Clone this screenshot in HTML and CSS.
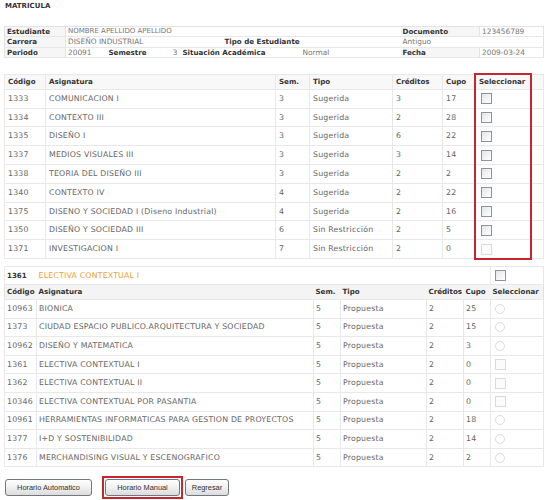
FILE: index.html
```html
<!DOCTYPE html>
<html lang="es">
<head>
<meta charset="utf-8">
<title>Matricula</title>
<link rel="stylesheet" href="styles.css">
</head>
<body>
<div class="page">
  <h1 class="title">MATRICULA</h1>

  <table class="info">
    <colgroup>
      <col class="i1"><col class="i2"><col class="i3"><col class="i4"><col class="i5"><col class="i6"><col class="i7"><col class="i8"><col class="i9">
    </colgroup>
    <tr>
      <th>Estudiante</th>
      <td colspan="6" class="name">NOMBRE APELLIDO APELLIDO</td>
      <th>Documento</th>
      <td>123456789</td>
    </tr>
    <tr>
      <th>Carrera</th>
      <td colspan="4">DISEÑO INDUSTRIAL</td>
      <th colspan="2" class="plain">Tipo de Estudiante</th>
      <td colspan="2">Antiguo</td>
    </tr>
    <tr>
      <th>Periodo</th>
      <td>20091</td>
      <th class="plain">Semestre</th>
      <td class="num">3</td>
      <th colspan="2" class="plain">Situación Académica</th>
      <td>Normal</td>
      <th>Fecha</th>
      <td>2009-03-24</td>
    </tr>
  </table>

  <div class="main-wrap">
    <table class="grid main">
      <colgroup>
        <col class="m1"><col class="m2"><col class="m3"><col class="m4"><col class="m5"><col class="m6"><col class="m7">
      </colgroup>
      <tr class="head">
        <th>Código</th><th>Asignatura</th><th>Sem.</th><th>Tipo</th><th>Créditos</th><th>Cupo</th><th>Seleccionar</th>
      </tr>
      <tr><td>1333</td><td>COMUNICACION I</td><td>3</td><td>Sugerida</td><td>3</td><td>17</td><td><span class="chk"></span></td></tr>
      <tr><td>1334</td><td>CONTEXTO III</td><td>3</td><td>Sugerida</td><td>2</td><td>28</td><td><span class="chk"></span></td></tr>
      <tr><td>1335</td><td>DISEÑO I</td><td>3</td><td>Sugerida</td><td>6</td><td>22</td><td><span class="chk"></span></td></tr>
      <tr><td>1337</td><td>MEDIOS VISUALES III</td><td>3</td><td>Sugerida</td><td>3</td><td>14</td><td><span class="chk"></span></td></tr>
      <tr><td>1338</td><td>TEORIA DEL DISEÑO III</td><td>3</td><td>Sugerida</td><td>2</td><td>2</td><td><span class="chk"></span></td></tr>
      <tr><td>1340</td><td>CONTEXTO IV</td><td>4</td><td>Sugerida</td><td>2</td><td>22</td><td><span class="chk"></span></td></tr>
      <tr><td>1375</td><td>DISENO Y SOCIEDAD I (Diseno Industrial)</td><td>4</td><td>Sugerida</td><td>2</td><td>16</td><td><span class="chk"></span></td></tr>
      <tr><td>1350</td><td>DISEÑO Y SOCIEDAD III</td><td>6</td><td>Sin Restricción</td><td>2</td><td>5</td><td><span class="chk"></span></td></tr>
      <tr><td>1371</td><td>INVESTIGACION I</td><td>7</td><td>Sin Restricción</td><td>2</td><td>0</td><td><span class="chk off"></span></td></tr>
    </table>
    <div class="hl"></div>
  </div>

  <table class="grid elect">
    <colgroup>
      <col class="e1"><col class="e2"><col class="e3"><col class="e4"><col class="e5"><col class="e6"><col class="e7">
    </colgroup>
    <tr class="group">
      <th>1361</th><td colspan="5" class="gname">ELECTIVA CONTEXTUAL I</td><td><span class="chk"></span></td>
    </tr>
    <tr class="head2">
      <th>Código</th><th>Asignatura</th><th>Sem.</th><th>Tipo</th><th>Créditos</th><th>Cupo</th><th>Seleccionar</th>
    </tr>
    <tr><td>10963</td><td>BIONICA</td><td>5</td><td>Propuesta</td><td>2</td><td>25</td><td><span class="rad"></span></td></tr>
    <tr><td>1373</td><td>CIUDAD ESPACIO PUBLICO.ARQUITECTURA Y SOCIEDAD</td><td>5</td><td>Propuesta</td><td>2</td><td>15</td><td><span class="rad"></span></td></tr>
    <tr><td>10962</td><td>DISEÑO Y MATEMATICA</td><td>5</td><td>Propuesta</td><td>2</td><td>3</td><td><span class="rad"></span></td></tr>
    <tr><td>1361</td><td>ELECTIVA CONTEXTUAL I</td><td>5</td><td>Propuesta</td><td>2</td><td>0</td><td><span class="chk off"></span></td></tr>
    <tr><td>1362</td><td>ELECTIVA CONTEXTUAL II</td><td>5</td><td>Propuesta</td><td>2</td><td>0</td><td><span class="chk off"></span></td></tr>
    <tr><td>10346</td><td>ELECTIVA CONTEXTUAL POR PASANTIA</td><td>5</td><td>Propuesta</td><td>2</td><td>0</td><td><span class="chk off"></span></td></tr>
    <tr><td>10961</td><td>HERRAMIENTAS INFORMATICAS PARA GESTION DE PROYECTOS</td><td>5</td><td>Propuesta</td><td>2</td><td>18</td><td><span class="rad"></span></td></tr>
    <tr><td>1377</td><td>I+D Y SOSTENIBILIDAD</td><td>5</td><td>Propuesta</td><td>2</td><td>14</td><td><span class="rad"></span></td></tr>
    <tr><td>1376</td><td>MERCHANDISING VISUAL Y ESCENOGRAFICO</td><td>5</td><td>Propuesta</td><td>2</td><td>2</td><td><span class="rad"></span></td></tr>
  </table>

  <div class="buttons">
    <button class="btn b1" type="button">Horario Automatico</button>
    <div class="mark"><button class="btn b2" type="button">Horario Manual</button></div>
    <button class="btn b3" type="button">Regresar</button>
  </div>
</div>
</body>
</html>
```

FILE: styles.css
```css
html, body {
  margin: 0;
  padding: 0;
  background: #ffffff;
}
body {
  font-family: "DejaVu Sans", Verdana, sans-serif;
  font-size: 7.8px;
  color: #666;
}
.page {
  padding: 0 0 0 4px;
}
.title {
  margin: 0 0 14px 1px;
  font-size: 7px;
  line-height: 12px;
  font-weight: bold;
  color: #333;
}

table {
  border-collapse: collapse;
  table-layout: fixed;
  width: 539px;
}
th, td {
  padding: 0 0 0 3px;
  text-align: left;
  white-space: nowrap;
  overflow: hidden;
}
td { letter-spacing: 0.2px; }
th {
  font-weight: bold;
  font-size: 7.1px;
  color: #333;
}

/* info table */
.info {
  border: 1px solid #e2e2e2;
}
.info tr { height: 10.3px; }
.info th, .info td {
  line-height: 9px;
  padding-left: 2px;
  border-bottom: 1px solid #e8e8e8;
}
.info th { background: #f6f6f6; border-right: 1px solid #e4e4e4; }
.info th.plain { background: #fff; border-right: 0; }
.info td { font-size: 7.4px; color: #777; letter-spacing: 0; }
.info td.name { font-size: 7px; }
.info td.num { text-align: right; padding-right: 3px; }
.i1 { width: 61px; } .i2 { width: 41px; } .i3 { width: 59px; }
.i4 { width: 15px; } .i5 { width: 42px; } .i6 { width: 78px; }
.i7 { width: 100px; } .i8 { width: 79px; } .i9 { width: 64px; }

/* grids */
.grid {
  border: 1px solid #e0e0e0;
}
.grid td {
  border: 1px solid #e8e8e8;
  line-height: 10px;
}
.grid th {
  line-height: 10px;
}

.main-wrap {
  position: relative;
  margin-top: 16px;
}
.main .head { height: 15px; }
.main .head th { border: 1px solid #e8e8e8; background: #f8f8f8; }
.main tr { height: 18.8px; }
.m1 { width: 41px; } .m2 { width: 230px; } .m3 { width: 34px; }
.m4 { width: 83px; } .m5 { width: 50px; } .m6 { width: 33px; } .m7 { width: 68px; }

.hl {
  position: absolute;
  left: 470px;
  top: -1px;
  width: 58px;
  height: 187px;
  border: 2px solid #c8252d;
  box-sizing: border-box;
}

.elect {
  margin-top: 7px;
}
.elect th, .elect td { padding-left: 2px; }
.elect tr { height: 18.6px; }
.elect .group { height: 18px; }
.elect .group th { border: 1px solid #e8e8e8; border-right: 0; }
.elect .group td.gname { border-left: 0; color: #e8a23a; }
.elect .head2 { height: 15px; }
.elect .head2 th { background: #f4f4f4; border-bottom: 1px solid #e8e8e8; }
.e1 { width: 32px; } .e2 { width: 277px; } .e3 { width: 27px; }
.e4 { width: 86px; } .e5 { width: 37px; } .e6 { width: 27px; } .e7 { width: 53px; }
.elect td:last-child { padding-left: 4px; }
.main td:last-child { padding-left: 5px; }

.chk {
  display: inline-block;
  width: 11px;
  height: 11px;
  box-sizing: border-box;
  border: 1px solid #8c939b;
  background: linear-gradient(135deg, #e3e6e9, #ffffff);
  vertical-align: middle;
}
.chk.off {
  border-color: #dadada;
  background: #fbfbfb;
}
.rad {
  display: inline-block;
  width: 10px;
  height: 10px;
  box-sizing: border-box;
  border: 1px solid #dcdcdc;
  border-radius: 50%;
  background: #fff;
  vertical-align: middle;
}

.buttons {
  display: flex;
  align-items: center;
  margin-top: 9px;
  margin-left: 1px;
}
.btn {
  height: 17px;
  padding: 0;
  font-family: "Liberation Sans", Arial, sans-serif;
  font-size: 7.4px;
  color: #333;
  border: 1px solid #6f7780;
  border-radius: 3px;
  background: linear-gradient(#ffffff, #f0f0f0 50%, #dcdcdc);
}
.b1 { width: 87px; margin-right: 10px; }
.mark {
  border: 2px solid #c8252d;
  padding: 1px 1px;
  display: flex;
}
.b2 { width: 75px; }
.b3 { width: 44px; margin-left: 2px; }
```
